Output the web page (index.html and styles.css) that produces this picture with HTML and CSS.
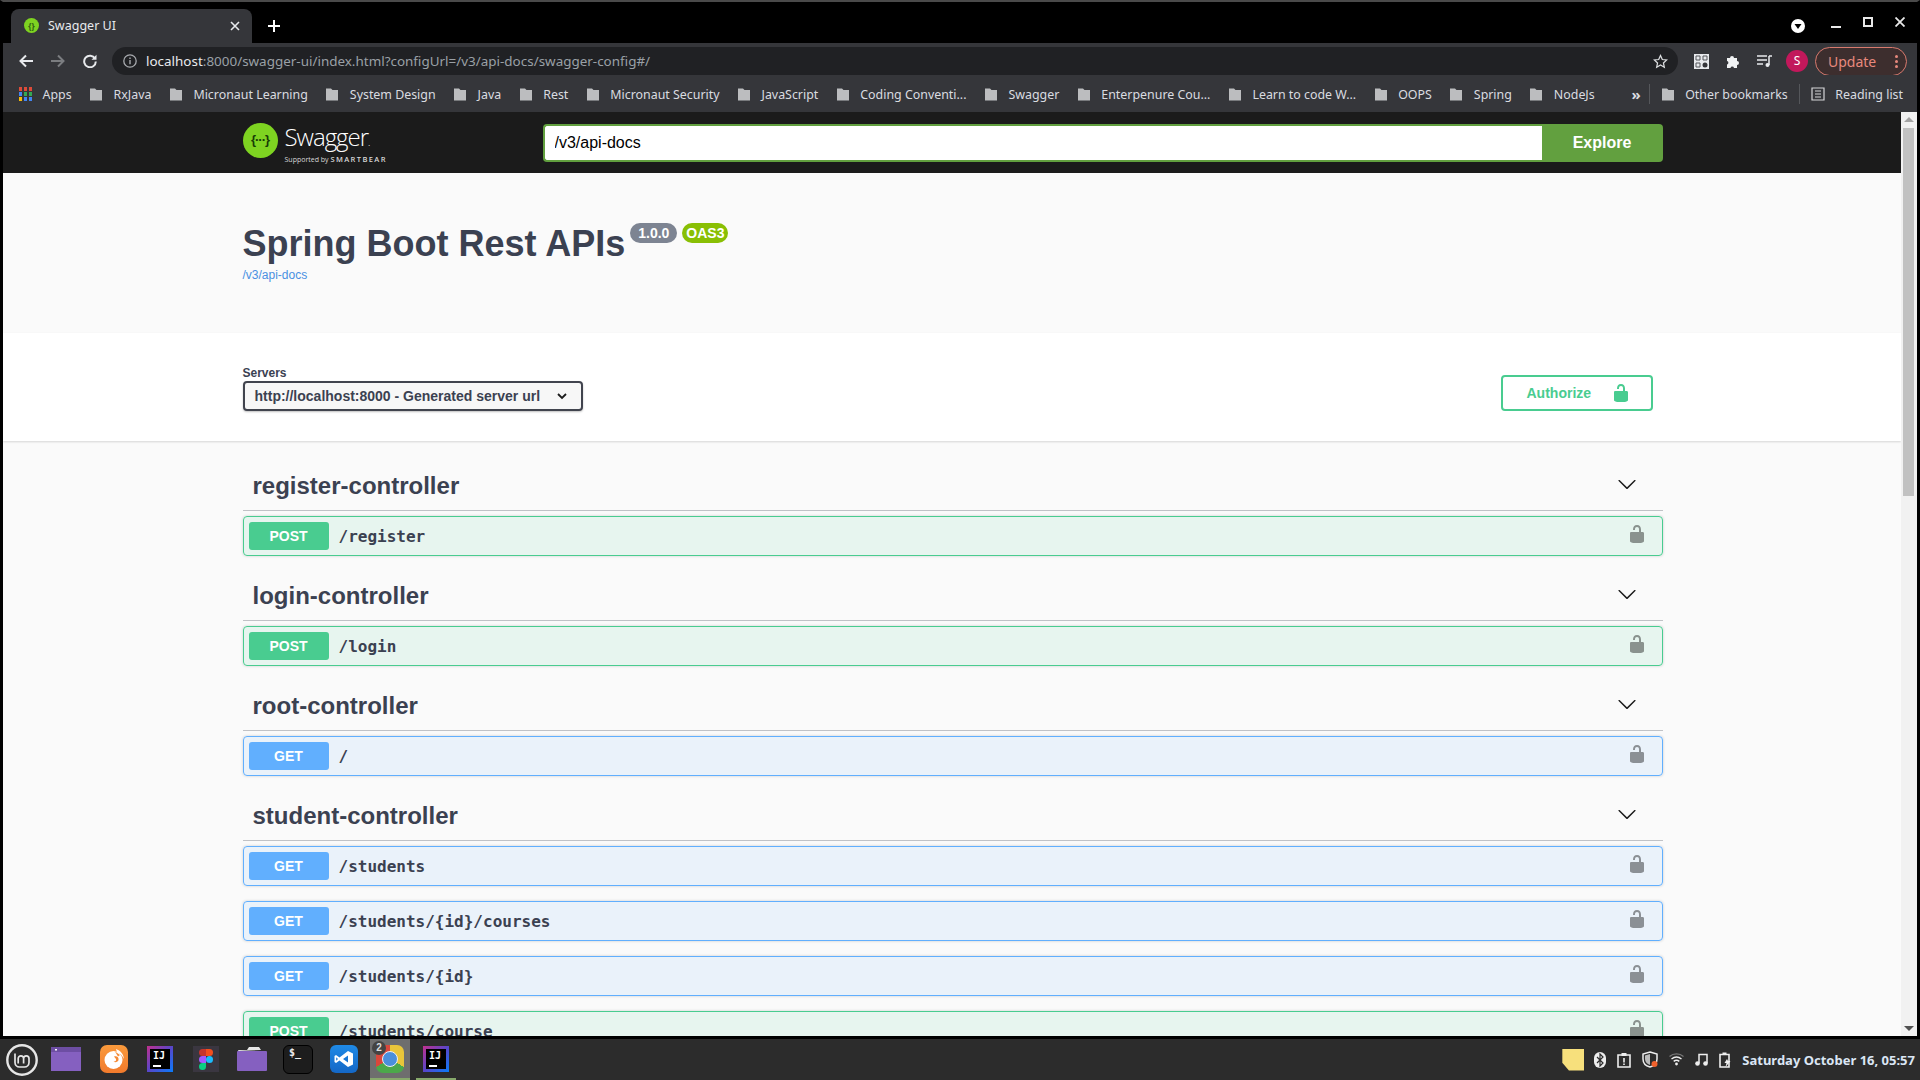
FILE: index.html
```html
<!doctype html>
<html>
<head>
    <title>Swagger UI</title>
    <meta charset="utf-8" />
    <link rel="stylesheet" href="styles.css">
</head>

<body>

<svg class="defs" width="0" height="0">
    <symbol id="folder" viewBox="0 0 14 14"><path d="M1 1.5h5l1.5 1.5H13v10.500H1z" /></symbol>
    <symbol id="lock" viewBox="0 0 20 20"><path d="M15.800 8H14V5.600C14 2.703 12.665 1 10 1 7.334 1 6 2.703 6 5.600V6h2v-.801C8 3.754 8.797 3 10 3c1.203 0 2 .754 2 2.199V8H4c-.553 0-1 .646-1 1.199V17c0 .549.428 1.139.951 1.307l1.197.387C5.672 18.861 6.550 19 7.100 19h5.800c.549 0 1.428-.139 1.951-.307l1.196-.387c.524-.167.953-.757.953-1.306V9.199C17 8.646 16.352 8 15.800 8z" /></symbol>
    <symbol id="chevron" viewBox="0 0 20 20"><path d="M17.418 6.109c.272-.268.709-.268.979 0s.271.701 0 .969l-7.908 7.830c-.27.268-.707.268-.979 0l-7.908-7.830c-.27-.268-.27-.701 0-.969.271-.268.709-.268.979 0L10 13.250l7.418-7.141z" /></symbol>
</svg>

<div class="window">

    <!-- browser chrome -->
    <div class="tabstrip">
        <div class="tab">
            <span class="favicon"><span class="favicon-mark">{}</span></span>
            <span class="tab-title">Swagger UI</span>
            <svg class="tab-close" width="10" height="10" viewBox="0 0 10 10"><path d="M1 1l8 8M9 1l-8 8" /></svg>
        </div>
        <svg class="new-tab" width="12" height="12" viewBox="0 0 12 12"><path d="M6 0v12M0 6h12" /></svg>
        <div class="window-controls">
            <svg class="account-down" width="14" height="14" viewBox="0 0 14 14"><circle cx="7" cy="7" r="7" fill="#fff" /><path d="M3.500 5h7L7 10z" fill="#000" /></svg>
            <span class="win-min"></span>
            <span class="win-max"></span>
            <svg class="win-close" width="10" height="10" viewBox="0 0 10 10"><path d="M.5.500l9 9M9.500.500l-9 9" /></svg>
        </div>
    </div>

    <div class="toolbar">
        <svg class="nav-icon" width="14" height="14" viewBox="0 0 14 14"><path d="M14 7H2M7 1.500L1.500 7 7 12.500" stroke="#e8eaed" /></svg>
        <svg class="nav-icon" width="14" height="14" viewBox="0 0 14 14"><path d="M0 7h12M7 1.500L12.500 7 7 12.500" stroke="#7b7d80" /></svg>
        <svg class="nav-icon" width="14" height="14" viewBox="0 0 14 14"><path d="M12 4.500A5.800 5.800 0 1 0 12.800 7.500" stroke="#e8eaed" /><path d="M13.500 .8v5h-5z" fill="#e8eaed" /></svg>
        <div class="omnibox">
            <svg width="14" height="14" viewBox="0 0 14 14"><circle cx="7" cy="7" r="6.200" fill="none" stroke="#a8abaf" stroke-width="1.300" /><path d="M6.300 6h1.400v4.200H6.300zM6.300 3.500h1.400v1.400H6.300z" fill="#a8abaf" /></svg>
            <span class="url"><span class="url-host">localhost</span>:8000/swagger-ui/index.html?configUrl=/v3/api-docs/swagger-config#/</span>
            <svg class="star" width="15" height="15" viewBox="0 0 24 24"><path d="M12 2.500l2.900 6.300 6.900.8-5.100 4.700 1.400 6.800-6.100-3.400-6.100 3.400 1.400-6.800-5.100-4.700 6.900-.8z" fill="none" stroke="#dcdee0" stroke-width="2" /></svg>
        </div>
        <svg class="qr" width="15" height="15" viewBox="0 0 15 15">
            <rect width="15" height="15" fill="#e8eaed" />
            <path d="M2 2h4v4H2zM9 2h4v4H9zM2 9h4v4H2z" fill="none" stroke="#55575b" stroke-width="1" />
            <circle cx="11" cy="11" r="2.500" fill="#35363a" />
        </svg>
        <svg class="puzzle" width="15" height="15" viewBox="0 0 15 15"><path d="M1 4h3a2 2 0 0 1 4 0h3v3a2 2 0 0 1 0 4v3H8a1.800 1.800 0 0 0-3.500 0H1v-3.500a1.800 1.800 0 0 0 0-3.500z" fill="#f1f3f4" /></svg>
        <svg class="media" width="16" height="14" viewBox="0 0 16 14"><path d="M0 2h10M0 6h10M0 10h6" stroke="#e8eaed" stroke-width="1.500" /><path d="M12 2h3M12 2v9" stroke="#e8eaed" stroke-width="1.500" /><circle cx="10.500" cy="11" r="2" fill="#e8eaed" /></svg>
        <span class="avatar">S</span>
        <div class="update">
            <span>Update</span>
            <span class="update-dots"><i></i><i></i><i></i></span>
        </div>
    </div>

    <div class="bookmarks">
        <div class="bookmark">
            <span class="apps-grid"><i class="r"></i><i class="r"></i><i class="r"></i><i class="b"></i><i class="g"></i><i class="g"></i><i class="y"></i><i class="b"></i><i class="b"></i></span>
            <span>Apps</span>
        </div>
        <div class="bookmark"><svg class="folder"><use href="#folder" /></svg><span>RxJava</span></div>
        <div class="bookmark"><svg class="folder"><use href="#folder" /></svg><span>Micronaut Learning</span></div>
        <div class="bookmark"><svg class="folder"><use href="#folder" /></svg><span>System Design</span></div>
        <div class="bookmark"><svg class="folder"><use href="#folder" /></svg><span>Java</span></div>
        <div class="bookmark"><svg class="folder"><use href="#folder" /></svg><span>Rest</span></div>
        <div class="bookmark"><svg class="folder"><use href="#folder" /></svg><span>Micronaut Security</span></div>
        <div class="bookmark"><svg class="folder"><use href="#folder" /></svg><span>JavaScript</span></div>
        <div class="bookmark"><svg class="folder"><use href="#folder" /></svg><span>Coding Conventi...</span></div>
        <div class="bookmark"><svg class="folder"><use href="#folder" /></svg><span>Swagger</span></div>
        <div class="bookmark"><svg class="folder"><use href="#folder" /></svg><span>Enterpenure Cou...</span></div>
        <div class="bookmark"><svg class="folder"><use href="#folder" /></svg><span>Learn to code W...</span></div>
        <div class="bookmark"><svg class="folder"><use href="#folder" /></svg><span>OOPS</span></div>
        <div class="bookmark"><svg class="folder"><use href="#folder" /></svg><span>Spring</span></div>
        <div class="bookmark"><svg class="folder"><use href="#folder" /></svg><span>NodeJs</span></div>
        <div class="bookmarks-end">
            <span class="more">»</span>
            <span class="divider"></span>
            <div class="bookmark"><svg class="folder"><use href="#folder" /></svg><span>Other bookmarks</span></div>
            <span class="divider"></span>
            <div class="bookmark">
                <svg width="14" height="14" viewBox="0 0 14 14"><path d="M1 1h12v12H1zM4 4h6M4 7h6M4 10h6" fill="none" stroke="#d5d6d8" stroke-width="1.200" /></svg>
                <span>Reading list</span>
            </div>
        </div>
    </div>

    <!-- swagger page -->
    <div class="viewport">
        <div class="page">
            <div class="topbar">
                <div class="wrapper topbar-wrapper">
                    <div class="logo">
                        <span class="logo-mark">{···}</span>
                        <div class="logo-text">
                            <span class="logo-name">Swagger<small>.</small></span>
                            <span class="logo-sub">Supported by <b>SMARTBEAR</b></span>
                        </div>
                    </div>
                    <form class="download-url">
                        <input class="download-url-input" type="text" value="/v3/api-docs">
                        <button class="download-url-button" type="button">Explore</button>
                    </form>
                </div>
            </div>

            <div class="info">
                <div class="wrapper">
                    <div class="title-row">
                        <h2 class="title">Spring Boot Rest APIs</h2>
                        <span class="version">1.0.0</span>
                        <span class="version version-oas">OAS3</span>
                    </div>
                    <a class="spec-link">/v3/api-docs</a>
                </div>
            </div>

            <div class="scheme-container">
                <div class="wrapper schemes">
                    <div class="servers">
                        <span class="servers-title">Servers</span>
                        <div class="server-select">
                            <span>http://localhost:8000 - Generated server url</span>
                            <svg width="12" height="12" viewBox="0 0 12 12"><path d="M2 4l4 4 4-4" /></svg>
                        </div>
                    </div>
                    <button class="authorize" type="button">
                        <span>Authorize</span>
                        <svg width="20" height="20"><use href="#lock" /></svg>
                    </button>
                </div>
            </div>

            <div class="wrapper operations">
                <div class="opblock-tag">
                    <h3>register-controller</h3>
                    <svg width="20" height="20"><use href="#chevron" /></svg>
                </div>
                <div class="opblock opblock-post">
                    <span class="method">POST</span>
                    <span class="path">/register</span>
                    <svg class="op-lock" width="20" height="20"><use href="#lock" /></svg>
                </div>

                <div class="opblock-tag">
                    <h3>login-controller</h3>
                    <svg width="20" height="20"><use href="#chevron" /></svg>
                </div>
                <div class="opblock opblock-post">
                    <span class="method">POST</span>
                    <span class="path">/login</span>
                    <svg class="op-lock" width="20" height="20"><use href="#lock" /></svg>
                </div>

                <div class="opblock-tag">
                    <h3>root-controller</h3>
                    <svg width="20" height="20"><use href="#chevron" /></svg>
                </div>
                <div class="opblock opblock-get">
                    <span class="method">GET</span>
                    <span class="path">/</span>
                    <svg class="op-lock" width="20" height="20"><use href="#lock" /></svg>
                </div>

                <div class="opblock-tag">
                    <h3>student-controller</h3>
                    <svg width="20" height="20"><use href="#chevron" /></svg>
                </div>
                <div class="opblock opblock-get">
                    <span class="method">GET</span>
                    <span class="path">/students</span>
                    <svg class="op-lock" width="20" height="20"><use href="#lock" /></svg>
                </div>
                <div class="opblock opblock-get">
                    <span class="method">GET</span>
                    <span class="path">/students/{id}/courses</span>
                    <svg class="op-lock" width="20" height="20"><use href="#lock" /></svg>
                </div>
                <div class="opblock opblock-get">
                    <span class="method">GET</span>
                    <span class="path">/students/{id}</span>
                    <svg class="op-lock" width="20" height="20"><use href="#lock" /></svg>
                </div>
                <div class="opblock opblock-post">
                    <span class="method">POST</span>
                    <span class="path">/students/course</span>
                    <svg class="op-lock" width="20" height="20"><use href="#lock" /></svg>
                </div>
            </div>
        </div>

        <div class="scrollbar">
            <span class="scroll-up"></span>
            <span class="scroll-thumb"></span>
            <span class="scroll-down"></span>
        </div>
    </div>
</div>

<!-- desktop panel -->
<div class="taskbar">
    <div class="start">
        <svg width="32" height="32" viewBox="0 0 32 32" fill="none" stroke="#e6e6e6">
            <circle cx="16" cy="16" r="14.700" stroke-width="2.400" />
            <path d="M9 9.500v9a4.500 4.500 0 0 0 4.500 4.500h5a4.500 4.500 0 0 0 4.500-4.500v-4a2.700 2.700 0 0 0-5.400 0v5M17.600 14.500a2.700 2.700 0 0 0-5.400 0v5" stroke-width="1.700" />
        </svg>
    </div>

    <div class="launcher">
        <svg width="30" height="24" viewBox="0 0 30 24"><rect width="30" height="24" fill="#8560c0" /><rect width="30" height="5" fill="#6d4ea3" /><rect x="4" y="2" width="2" height="1.500" fill="#fff" /></svg>
    </div>
    <div class="launcher">
        <span class="firefox">
            <svg width="22" height="22" viewBox="0 0 22 22">
                <circle cx="10.500" cy="12" r="9" fill="#fff" />
                <path d="M11 8.500c3-1 5 1 4.500 3.500-.5 2-3.500 3-5 1.500 2 .3 3-1 2.500-2.500z" fill="#f58a35" />
                <path d="M13 1c4.500 1.500 7.500 5 8 10-1.500-3.500-4-5.500-7-6.500z" fill="#fff" />
                <path d="M12 3.500l5 3.500-2 1.500z" fill="#f58a35" />
            </svg>
        </span>
    </div>
    <div class="launcher"><span class="idea"><span class="idea-inner">IJ<i></i></span></span></div>
    <div class="launcher">
        <span class="figma">
            <svg width="14" height="21" viewBox="0 0 14 21">
                <path d="M7 0h3.500a3.500 3.500 0 0 1 0 7H7z" fill="#f24e1e" />
                <path d="M7 0H3.500a3.500 3.500 0 0 0 0 7H7z" fill="#c7352c" />
                <path d="M7 7H3.500a3.500 3.500 0 0 0 0 7H7z" fill="#a259ff" />
                <circle cx="10.500" cy="10.500" r="3.500" fill="#1abcfe" />
                <path d="M3.500 14H7v3.500A3.500 3.500 0 1 1 3.500 14z" fill="#0acf83" />
            </svg>
        </span>
    </div>
    <div class="launcher">
        <svg width="30" height="24" viewBox="0 0 30 24"><path d="M1 4a1 1 0 0 1 1-1h8l2-3h10l2 3z" fill="#e8e8e8" /><rect y="4" width="30" height="20" rx="1" fill="#8560c0" /></svg>
    </div>
    <div class="launcher"><span class="terminal">$_</span></div>
    <div class="launcher">
        <span class="vscode">
            <svg width="20" height="18" viewBox="0 0 20 18"><path d="M14 1l5 2.500v11L14 17 5.500 10.500 2 13l-1.500-1V6L2 5l3.500 2.500zM14 5.500L9 9l5 3.500zM2.200 7.300v3.400L4 9z" fill="#fff" fill-rule="evenodd" /></svg>
        </span>
    </div>
    <div class="launcher launcher-active running">
        <span class="chrome"><span class="chrome-dot"></span></span>
        <span class="launcher-badge">2</span>
    </div>
    <div class="launcher running"><span class="idea"><span class="idea-inner">IJ<i></i></span></span></div>

    <div class="tray">
        <span class="note"></span>
        <svg width="12" height="16" viewBox="0 0 12 16"><rect width="12" height="16" rx="6" fill="#eee" /><path d="M3 5l6 6-3 3V2l3 3-6 6" fill="none" stroke="#2d2d2d" stroke-width="1.200" /></svg>
        <svg width="14" height="16" viewBox="0 0 14 16"><path d="M1 3h12v12H1z" fill="none" stroke="#eee" stroke-width="1.600" /><path d="M4.500 1h5v3h-5z" fill="#eee" /><path d="M6.200 6h1.600v4.500H6.200zM6.200 11.500h1.600v1.600H6.200z" fill="#eee" /></svg>
        <svg width="16" height="17" viewBox="0 0 16 17"><path d="M8 1l7 2v5c0 4-3 7-7 8-4-1-7-4-7-8V3z" fill="none" stroke="#eee" stroke-width="1.500" /><path d="M8 3v11c-3-1-5-3-5-6V4.500z" fill="#bbb" /><circle cx="12.500" cy="13" r="3" fill="#f0622d" /></svg>
        <svg width="15" height="13" viewBox="0 0 15 13"><path d="M.5 3.500c4-3.500 10-3.500 14 0" stroke="#777" fill="none" stroke-width="1.300" /><path d="M2.500 6c3-2.500 7-2.500 10 0M4.700 8.400c1.600-1.300 4-1.300 5.600 0" stroke="#eee" fill="none" stroke-width="1.400" /><circle cx="7.500" cy="11" r="1.400" fill="#eee" /></svg>
        <svg width="13" height="13" viewBox="0 0 13 13"><path d="M4 10V1.500h8V10" fill="none" stroke="#eee" stroke-width="1.500" /><circle cx="2.500" cy="10.500" r="2.300" fill="#eee" /><circle cx="10.500" cy="10.500" r="2.300" fill="#eee" /></svg>
        <svg width="13" height="16" viewBox="0 0 13 16"><path d="M1 2.500h9V15H1z" fill="none" stroke="#eee" stroke-width="1.600" /><path d="M3.500 .5h4v2h-4z" fill="#eee" /><path d="M8 7l-2.500 4h2L6.500 15l5-6H9z" fill="#eee" /></svg>
        <span class="clock">Saturday October 16, 05:57</span>
    </div>
</div>

</body>
</html>
```

FILE: styles.css
```css
html, body{
    margin:0;
    height:1080px;
    overflow:hidden;
    background:#2c2c2c;
}

body{
    display:flex;
    flex-direction:column;
    font-family:"Liberation Sans", Arial, sans-serif;
    color:#3b4151;
}

.defs{
    position:absolute;
}

.window{
    height:1039px;
    box-sizing:border-box;
    display:flex;
    flex-direction:column;
    background:#000;
    border-top:2px solid #4a4a4a;
    border-left:3px solid #000;
    border-right:3px solid #000;
    border-bottom:3px solid #000;
}

/* ========= Browser chrome ==================== */

.tabstrip{
    height:41px;
    flex:none;
    display:flex;
    align-items:flex-end;
    padding-left:8px;
    background:#000;
    font-family:"Noto Sans", sans-serif;
}

.tab{
    width:241px;
    height:34px;
    box-sizing:border-box;
    display:flex;
    align-items:center;
    padding:0 12px 1px 13px;
    background:#35363a;
    border-radius:8px 8px 0 0;
    color:#e8eaed;
    font-size:12.500px;
}

.favicon{
    width:15px;
    height:15px;
    margin-right:9px;
    border-radius:50%;
    background:#7ed321;
    display:flex;
    align-items:center;
    justify-content:center;
}

.favicon-mark{
    font-size:8px;
    font-weight:bold;
    line-height:1;
    color:#2d5a12;
}

.tab-title{
    flex:1;
}

.tab-close{
    stroke:#e8eaed;
    stroke-width:1.600;
}

.new-tab{
    margin:0 0 11px 16px;
    stroke:#fff;
    stroke-width:2;
}

.window-controls{
    margin-left:auto;
    height:100%;
    position:relative;
    width:162px;
}

.account-down{
    position:absolute;
    left:36px;
    top:17px;
}

.win-min{
    position:absolute;
    left:76px;
    top:24px;
    width:10px;
    height:2px;
    background:#e8e8e8;
}

.win-max{
    position:absolute;
    left:108px;
    top:15px;
    width:6px;
    height:6px;
    border:2px solid #e8e8e8;
}

.win-close{
    position:absolute;
    left:140px;
    top:15px;
    stroke:#e8e8e8;
    stroke-width:1.800;
}

.toolbar{
    height:32px;
    flex:none;
    box-sizing:border-box;
    display:flex;
    align-items:flex-start;
    padding:4px 10px 0 16px;
    background:#35363a;
}

.nav-icon{
    flex:none;
    margin:7px 18px 0 0;
    fill:none;
    stroke-width:2;
}

.omnibox{
    width:1566px;
    height:28px;
    flex:none;
    box-sizing:border-box;
    margin-left:-3px;
    padding:0 10px 0 11px;
    display:flex;
    align-items:center;
    background:#202124;
    border-radius:14px;
    font-family:"Noto Sans", sans-serif;
    font-size:13.450px;
    color:#9aa0a6;
}

.url{
    margin-left:9px;
    flex:1;
    white-space:nowrap;
}

.url-host{
    color:#e8eaed;
}

.qr{
    flex:none;
    margin:7px 0 0 16px;
}

.puzzle{
    flex:none;
    margin:7px 0 0 17px;
}

.media{
    flex:none;
    margin:7px 0 0 16px;
}

.avatar{
    width:22px;
    height:22px;
    flex:none;
    margin:3px 0 0 13px;
    border-radius:50%;
    background:#c2185b;
    color:#fff;
    font:12px/22px "Noto Sans", sans-serif;
    text-align:center;
}

.update{
    width:92px;
    height:29px;
    flex:none;
    box-sizing:border-box;
    margin:0 0 0 7px;
    padding:0 8px 0 12px;
    display:flex;
    align-items:center;
    justify-content:space-between;
    background:#3d2e2e;
    border:1px solid #d97a6e;
    border-radius:15px;
    color:#e8897d;
    font:14px "Noto Sans", sans-serif;
}

.update-dots{
    display:flex;
    flex-direction:column;
    gap:2px;
}

.update-dots i{
    width:3px;
    height:3px;
    border-radius:50%;
    background:#e8897d;
}

.bookmarks{
    height:37px;
    flex:none;
    box-sizing:border-box;
    display:flex;
    align-items:center;
    gap:17.500px;
    padding:1px 14px 0 16px;
    background:#35363a;
    color:#dadce0;
    font-family:"Noto Sans", sans-serif;
    font-size:12.400px;
    white-space:nowrap;
}

.bookmark{
    display:flex;
    align-items:center;
    gap:10.500px;
}

.folder{
    width:14px;
    height:14px;
    flex:none;
    fill:#bcbdbf;
}

.apps-grid{
    width:13px;
    height:14px;
    display:grid;
    grid-template-columns:repeat(3, 3px);
    grid-template-rows:repeat(3, 4px);
    gap:1px 2px;
}

.apps-grid .r{ background:#dd4b39; }
.apps-grid .b{ background:#4285f4; }
.apps-grid .g{ background:#34a853; }
.apps-grid .y{ background:#fbbc05; }

.bookmarks-end{
    margin-left:auto;
    display:flex;
    align-items:center;
    gap:11px;
}

.more{
    font-size:15px;
    font-weight:bold;
    margin-right:-3px;
    line-height:1;
}

.divider{
    width:1px;
    height:20px;
    background:#55575b;
}

/* ========= Swagger page ==================== */

.viewport{
    flex:1;
    min-height:0;
    display:flex;
}

.page{
    flex:1;
    min-width:0;
    overflow:hidden;
    background:#fafafa;
}

.wrapper{
    max-width:1420px;
    margin:0 auto;
    padding:0 19.500px 0 20.500px;
}

.topbar{
    height:61px;
    background:#1b1b1b;
}

.topbar-wrapper{
    height:100%;
    display:flex;
    align-items:center;
}

.logo{
    width:300px;
    display:flex;
    align-items:center;
    gap:7px;
    color:#fff;
}

.logo-mark{
    width:35px;
    height:35px;
    margin-top:-4px;
    border-radius:50%;
    background:#7ed321;
    color:#173b06;
    font:bold 13px/34px "Liberation Sans", sans-serif;
    text-align:center;
    letter-spacing:-1px;
}

.logo-text{
    display:flex;
    flex-direction:column;
    margin-top:5px;
}

.logo-name{
    font:300 24px/24px "Open Sans", sans-serif;
    letter-spacing:-1px;
}

.logo-name small{
    font-size:10px;
}

.logo-sub{
    font:7px/10px "Open Sans", sans-serif;
    color:#d8d8d8;
    white-space:nowrap;
}

.logo-sub b{
    font-size:7.500px;
    letter-spacing:1.400px;
    font-weight:600;
}

.download-url{
    flex:1;
    margin:0;
    display:flex;
    height:38px;
}

.download-url-input{
    flex:1;
    min-width:0;
    box-sizing:border-box;
    margin:0;
    padding:8px 10px;
    border:2px solid #62a03f;
    border-right:none;
    border-radius:4px 0 0 4px;
    outline:none;
    background:#fff;
    color:#000;
    font:16px "Liberation Sans", sans-serif;
}

.download-url-button{
    width:121px;
    border:none;
    border-radius:0 4px 4px 0;
    background:#62a03f;
    color:#fff;
    font:bold 16px "Liberation Sans", sans-serif;
}

.info{
    height:160px;
    box-sizing:border-box;
    padding-top:50px;
}

.title-row{
    display:flex;
    align-items:flex-start;
}

.title{
    margin:0 5px 0 0;
    font-size:36px;
    line-height:41px;
    font-weight:bold;
}

.version{
    height:20px;
    box-sizing:border-box;
    margin:0 5px 0 0;
    padding:2px 8px;
    border-radius:57px;
    background:#7d8492;
    color:#fff;
    font-size:14px;
    line-height:16px;
    font-weight:bold;
}

.version-oas{
    padding:2px 4px;
    background:#89bf04;
}

.spec-link{
    display:block;
    margin-top:4px;
    color:#4990e2;
    font-size:12px;
    line-height:14px;
}

.scheme-container{
    height:108px;
    box-sizing:border-box;
    padding-top:33px;
    background:#fff;
    box-shadow:0 1px 2px 0 rgba(0,0,0,.15);
    position:relative;
}

.schemes{
    display:flex;
    justify-content:space-between;
    align-items:flex-start;
}

.servers-title{
    display:block;
    font-size:12px;
    line-height:14px;
    font-weight:bold;
}

.server-select{
    width:340px;
    height:30px;
    box-sizing:border-box;
    margin-top:1px;
    padding:0 13px 0 10px;
    display:flex;
    align-items:center;
    justify-content:space-between;
    background:#f7f7f7;
    border:2px solid #41444e;
    border-radius:4px;
    box-shadow:0 1px 2px 0 rgba(0,0,0,.25);
    font-size:14px;
    font-weight:bold;
}

.server-select svg{
    fill:none;
    stroke:#1b1b1b;
    stroke-width:1.800;
}

.authorize{
    width:152px;
    height:36px;
    box-sizing:border-box;
    margin:9px 10px 0 0;
    padding:0 20px 0 24px;
    display:flex;
    align-items:center;
    justify-content:space-between;
    background:transparent;
    border:2px solid #49cc90;
    border-radius:4px;
    color:#49cc90;
    fill:#49cc90;
    font:bold 14px "Liberation Sans", sans-serif;
}

.operations{
    padding-top:20px;
}

.opblock-tag{
    height:50px;
    box-sizing:border-box;
    margin-bottom:5px;
    padding:0 26px 0 10px;
    display:flex;
    align-items:center;
    justify-content:space-between;
    border-bottom:1px solid rgba(59,65,81,.3);
}

.opblock-tag h3{
    margin:1px 0 0;
    font-size:24px;
    font-weight:bold;
}

.opblock-tag svg{
    margin-top:-3px;
    fill:#1b1b1b;
}

.opblock{
    height:40px;
    box-sizing:border-box;
    margin-bottom:15px;
    padding:5px;
    display:flex;
    align-items:center;
    border:1px solid;
    border-radius:4px;
    box-shadow:0 0 3px rgba(0,0,0,.19);
}

.opblock-post{
    background:rgba(73,204,144,.1);
    border-color:#49cc90;
}

.opblock-get{
    background:rgba(97,175,254,.1);
    border-color:#61affe;
}

.method{
    width:80px;
    height:28px;
    border-radius:3px;
    color:#fff;
    font-size:14px;
    line-height:28px;
    font-weight:bold;
    text-align:center;
}

.opblock-post .method{
    background:#49cc90;
}

.opblock-get .method{
    background:#61affe;
}

.path{
    flex:1;
    padding:0 10px;
    font-family:"DejaVu Sans Mono", monospace;
    font-size:16px;
    font-weight:bold;
}

.op-lock{
    margin:0 10px 4px 0;
    fill:#000;
    opacity:.4;
}

.scrollbar{
    width:16px;
    flex:none;
    box-sizing:border-box;
    padding:5px 2px;
    display:flex;
    flex-direction:column;
    align-items:center;
    background:#f1f1f1;
}

.scroll-up, .scroll-down{
    width:0;
    height:0;
    border-left:5px solid transparent;
    border-right:5px solid transparent;
}

.scroll-up{
    border-bottom:5px solid #a3a3a3;
}

.scroll-down{
    margin-top:auto;
    border-top:5px solid #505050;
}

.scroll-thumb{
    width:11px;
    height:368px;
    margin:6px 0 0 -1px;
    background:#c1c1c1;
}

/* ========= Desktop panel ==================== */

.taskbar{
    height:41px;
    flex:none;
    display:flex;
    align-items:stretch;
    background:#2c2c2c;
}

.start{
    width:43px;
    display:flex;
    align-items:center;
    justify-content:center;
}

.start + .launcher{
    margin-right:2px;
}

.launcher{
    width:46px;
    box-sizing:border-box;
    display:flex;
    align-items:center;
    justify-content:center;
    position:relative;
    padding-bottom:1px;
}

.launcher-active{
    width:40px;
    margin:0 3px;
    background:#6e6e6e;
}

.running::after{
    content:"";
    position:absolute;
    left:3px;
    right:3px;
    bottom:0;
    height:2px;
    background:#87a96b;
}

.launcher-active.running::after{
    left:0;
    right:0;
}

.launcher-badge{
    position:absolute;
    left:2px;
    top:2px;
    width:14px;
    height:14px;
    border-radius:50%;
    background:#444;
    color:#ddd;
    font:bold 10px/14px "Liberation Sans", sans-serif;
    text-align:center;
}

.firefox{
    width:28px;
    height:28px;
    border-radius:7px;
    background:linear-gradient(#fa9a3c, #f17a2c);
    display:flex;
    align-items:center;
    justify-content:center;
}

.idea{
    width:26px;
    height:26px;
    box-sizing:border-box;
    padding:3px;
    background:linear-gradient(135deg, #c2308d 0%, #5846c9 50%, #087cfa 100%);
}

.idea-inner{
    display:block;
    height:100%;
    box-sizing:border-box;
    padding:2px 0 0 3px;
    position:relative;
    background:#000;
    color:#fff;
    font:bold 10px/10px "DejaVu Sans Mono", monospace;
}

.idea-inner i{
    position:absolute;
    left:3px;
    bottom:2px;
    width:8px;
    height:2px;
    background:#fff;
}

.figma{
    width:26px;
    height:26px;
    display:flex;
    align-items:center;
    justify-content:center;
    background:#3a3640;
}

.terminal{
    width:30px;
    height:29px;
    box-sizing:border-box;
    padding:1px 0 0 5px;
    background:#1d1d1d;
    border:1px solid #000;
    border-radius:6px;
    color:#eee;
    font:bold 10px/12px "DejaVu Sans Mono", monospace;
}

.vscode{
    width:28px;
    height:28px;
    display:flex;
    align-items:center;
    justify-content:center;
    border-radius:6px;
    background:linear-gradient(#1f8ae6, #1467c6);
}

.chrome{
    width:28px;
    height:28px;
    border-radius:7px;
    display:flex;
    align-items:center;
    justify-content:center;
    background:conic-gradient(#e8c53a 0 120deg, #4ba84a 120deg 240deg, #d9473b 240deg 360deg);
}

.chrome-dot{
    width:14px;
    height:14px;
    border-radius:50%;
    background:#4a8fdc;
    border:1.500px solid #eee;
}

.tray{
    margin-left:auto;
    display:flex;
    align-items:center;
    gap:11px;
    padding-right:5px;
}

.note{
    width:22px;
    height:22px;
    background:#f7e07c;
    clip-path:polygon(0 0, 100% 0, 100% 100%, 30% 100%, 0 65%);
    margin-right:-1px;
}

.clock{
    color:#dbe6f4;
    font:bold 13px "Noto Sans", sans-serif;
    margin-left:-1px;
    white-space:nowrap;
}
```
